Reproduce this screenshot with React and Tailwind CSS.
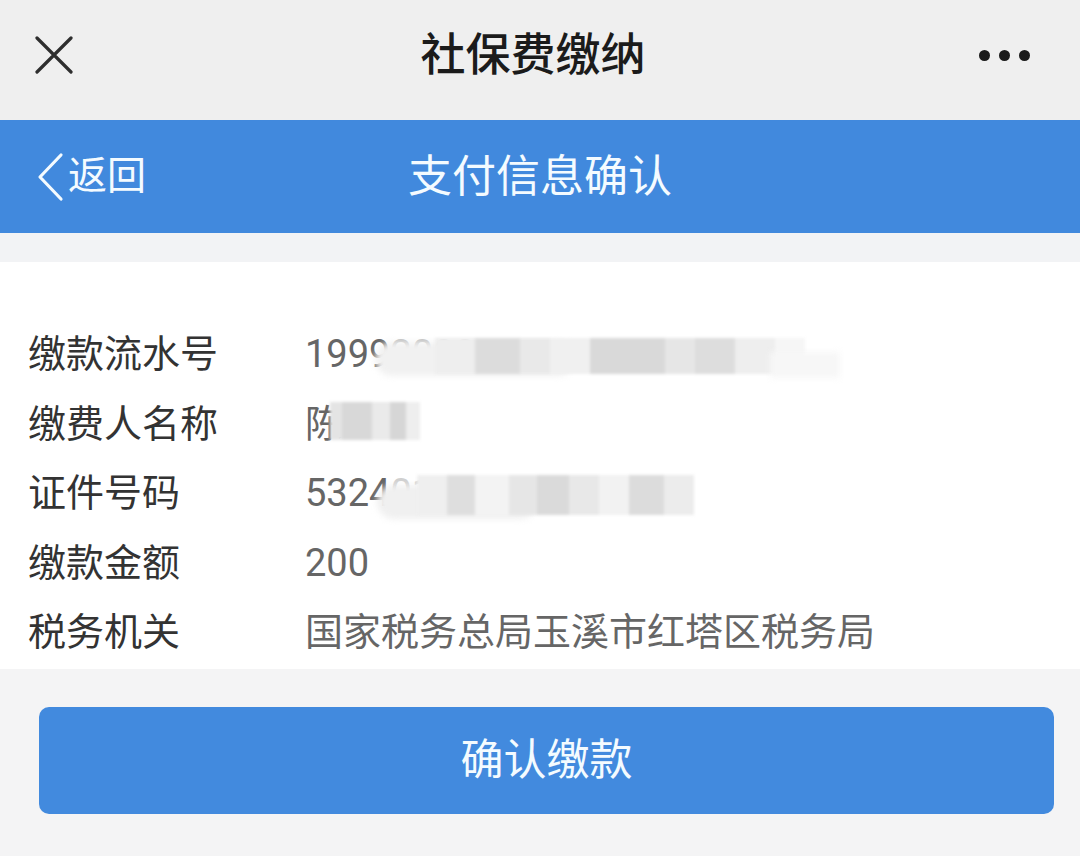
import React from "react";

const FONT = { fontFamily: 'Roboto, "Noto Sans CJK SC", sans-serif' };

function Mosaic({ blocks }) {
  return (
    <div className="flex items-stretch blur-[1.5px]">
      {blocks.map((b, i) => (
        <div key={i} style={{ width: b[0], backgroundColor: b[1] }} />
      ))}
    </div>
  );
}

function Row({ label, children }) {
  return (
    <div className="flex items-center h-[69.5px]">
      <div className="w-[305px] pl-[28px] text-[38px] text-[#333333]">{label}</div>
      <div className="relative flex-1 text-[38px] text-[#666666]">{children}</div>
    </div>
  );
}

export default function App() {
  return (
    <div className="w-[1080px] h-[856px] bg-[#f4f4f5] flex flex-col overflow-hidden" style={FONT}>
      {/* top header */}
      <div className="h-[120px] bg-[#efefef] flex items-center pb-[10px]">
        <div className="w-[100px] pl-[35px] flex items-center">
          <svg width="38" height="38" viewBox="0 0 38 38">
            <path d="M2 2 L36 36 M36 2 L2 36" stroke="#2e2e2e" strokeWidth="3.2" strokeLinecap="round" />
          </svg>
        </div>
        <div className="flex-1 text-center text-[45px] font-medium text-[#1b1b1b] leading-none">社保费缴纳</div>
        <div className="w-[114px] flex items-center gap-[9px] pl-[13px]">
          <span className="w-[11px] h-[11px] rounded-full bg-[#1b1b1b]" />
          <span className="w-[11px] h-[11px] rounded-full bg-[#1b1b1b]" />
          <span className="w-[11px] h-[11px] rounded-full bg-[#1b1b1b]" />
        </div>
      </div>

      {/* blue bar */}
      <div className="h-[113px] bg-[#4189dd] flex items-center relative">
        <div className="absolute left-[36px] top-0 h-full flex items-center gap-[4px]">
          <svg width="28" height="50" viewBox="0 0 28 50">
            <path d="M25 3 L4 25 L25 47" fill="none" stroke="#f4fbff" strokeWidth="3.2" strokeLinecap="round" strokeLinejoin="round" />
          </svg>
          <span className="text-[39px] text-[#f4fbff] leading-none">返回</span>
        </div>
        <div className="flex-1 text-center text-[44px] text-[#f4fbff] leading-none">支付信息确认</div>
      </div>

      {/* gray band */}
      <div className="h-[29px] bg-[#f2f3f5]" />

      {/* info card */}
      <div className="bg-white pt-[58px] pb-[1px]">
        <Row label="缴款流水号">
          <span>1999</span>
          <span className="text-[#bdbdbd]">2000</span>
          <div className="absolute left-[70px] top-[8px] h-[42px] w-[460px]">
            <div className="absolute left-0 top-[8px] h-[34px] w-[200px] rounded-full bg-[#f1f1f1] blur-[3px]" />
            <div className="absolute left-[60px] top-[4px] h-[36px] flex">
              <Mosaic
                blocks={[
                  [40, "#eeeeee"],
                  [45, "#dcdcdc"],
                  [30, "#e9e9e9"],
                  [40, "#f0f0f0"],
                  [75, "#d9d9d9"],
                  [30, "#e6e6e6"],
                  [40, "#dddddd"],
                  [40, "#eeeeee"],
                  [30, "#f6f6f6"],
                ]}
              />
            </div>
            <div className="absolute left-[395px] top-[18px] h-[26px] w-[70px] bg-[#f7f7f7] blur-[3px]" />
          </div>
        </Row>
        <Row label="缴费人名称">
          <span>陈</span>
          <div className="absolute left-[25px] top-[6px] h-[38px] flex">
            <Mosaic
              blocks={[
                [12, "#e4e4e4"],
                [30, "#d8d8d8"],
                [18, "#eaeaea"],
                [16, "#d6d6d6"],
                [14, "#eeeeee"],
              ]}
            />
          </div>
        </Row>
        <Row label="证件号码">
          <span>5324</span>
          <span className="text-[#cfcfcf]">01</span>
          <div className="absolute left-[72px] top-[10px] h-[44px] w-[400px]">
            <div className="absolute left-0 top-[10px] h-[34px] w-[160px] rounded-full bg-[#f0f0f0] blur-[3px]" />
            <div className="absolute left-[40px] top-[0px] h-[40px] flex">
              <Mosaic
                blocks={[
                  [30, "#efefef"],
                  [28, "#dedede"],
                  [34, "#f3f3f3"],
                  [28, "#e6e6e6"],
                  [32, "#dadada"],
                  [30, "#e8e8e8"],
                  [30, "#f2f2f2"],
                  [35, "#dcdcdc"],
                  [30, "#ececec"],
                ]}
              />
            </div>
          </div>
        </Row>
        <Row label="缴款金额">
          <span>200</span>
        </Row>
        <Row label="税务机关">
          <span>国家税务总局玉溪市红塔区税务局</span>
        </Row>
      </div>

      {/* button */}
      <div className="pl-[39px] pr-[26px] pt-[38px]">
        <div className="h-[107px] rounded-[10px] bg-[#428ade] flex items-center justify-center">
          <span className="text-[43px] text-[#f4fbff] leading-none">确认缴款</span>
        </div>
      </div>
    </div>
  );
}
